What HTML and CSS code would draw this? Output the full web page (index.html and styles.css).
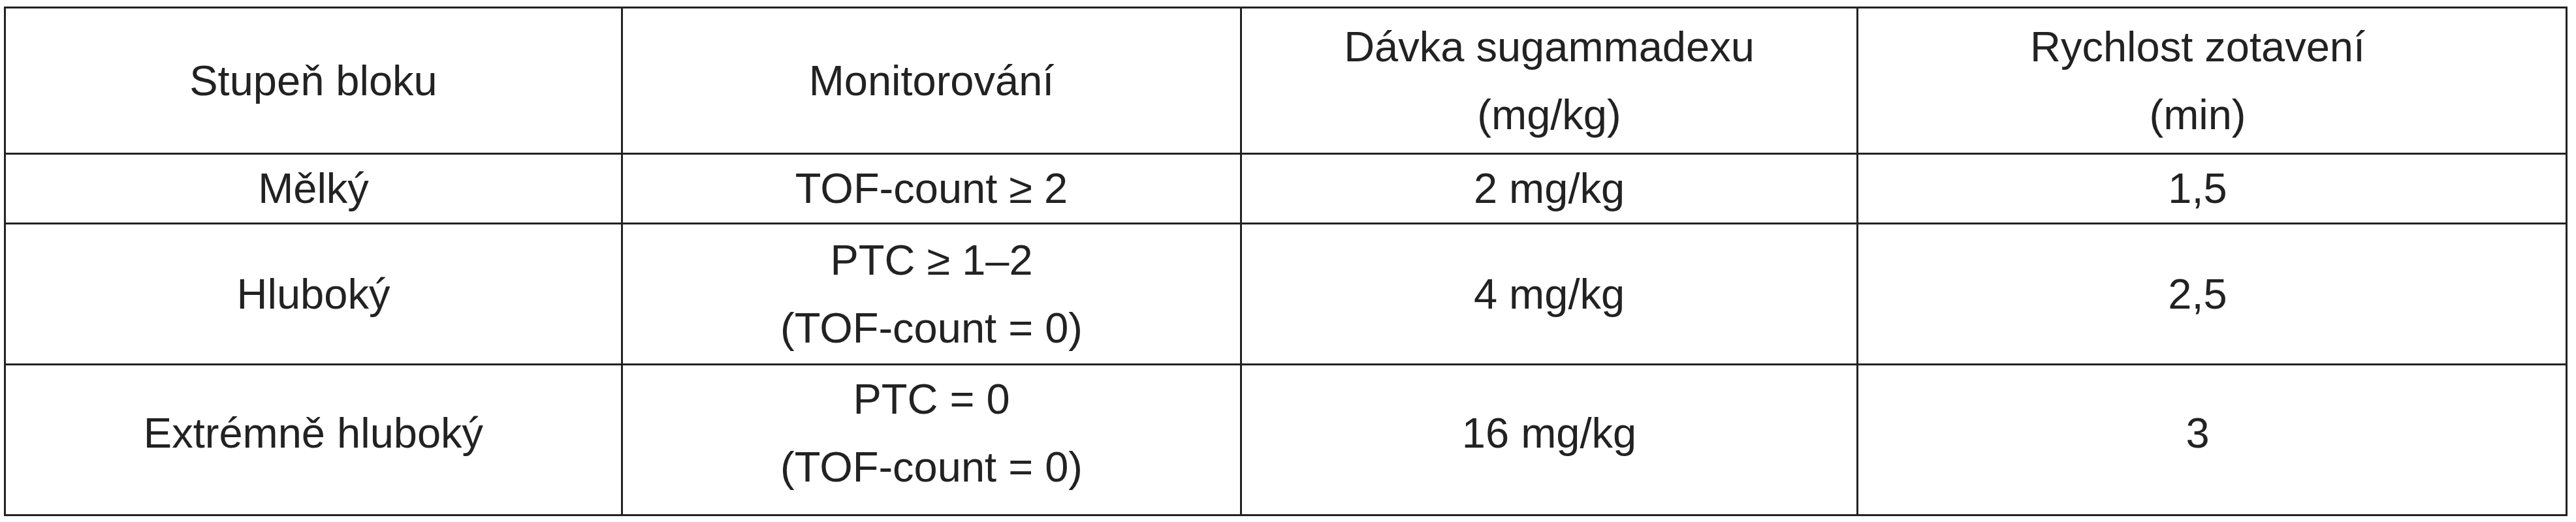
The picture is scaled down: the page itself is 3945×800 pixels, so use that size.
FILE: index.html
```html
<!DOCTYPE html>
<html lang="cs">
<head>
<meta charset="utf-8">
<title>Sugammadex</title>
<link rel="stylesheet" href="styles.css">
</head>
<body>
<table class="grid">
  <colgroup>
    <col class="c1"><col class="c2"><col class="c3"><col class="c4">
  </colgroup>
  <tr class="r-head">
    <td>Stupeň bloku</td>
    <td>Monitorování</td>
    <td>Dávka sugammadexu<br>(mg/kg)</td>
    <td class="last">Rychlost zotavení<br>(min)</td>
  </tr>
  <tr class="r-1">
    <td>Mělký</td>
    <td>TOF-count ≥ 2</td>
    <td>2 mg/kg</td>
    <td class="last">1,5</td>
  </tr>
  <tr class="r-2">
    <td>Hluboký</td>
    <td>PTC ≥ 1–2<br>(TOF-count = 0)</td>
    <td>4 mg/kg</td>
    <td class="last">2,5</td>
  </tr>
  <tr class="r-3">
    <td>Extrémně hluboký</td>
    <td>PTC = 0<br>(TOF-count = 0)</td>
    <td>16 mg/kg</td>
    <td class="last">3</td>
  </tr>
</table>
</body>
</html>
```

FILE: styles.css
```css
html, body {
  margin: 0;
  padding: 0;
  background: #ffffff;
}

body {
  padding: 10px 0 0 6px;
  font-family: "Liberation Sans", Arial, sans-serif;
  color: #222222;
}

.grid {
  border-collapse: collapse;
  table-layout: fixed;
  width: 3926px;
  font-size: 65px;
  line-height: 104px;
}

.c1 { width: 945px; }
.c2 { width: 948px; }
.c3 { width: 944px; }
.c4 { width: 1086px; }

.grid td {
  border: 3px solid #222222;
  padding: 0;
  text-align: center;
  vertical-align: middle;
}

.grid td.last {
  padding-right: 44px;
}

.r-head td { height: 221px; }
.r-1 td { height: 104px; }
.r-2 td { height: 213px; }
.r-3 td { height: 207px; padding-bottom: 20px; }
```
